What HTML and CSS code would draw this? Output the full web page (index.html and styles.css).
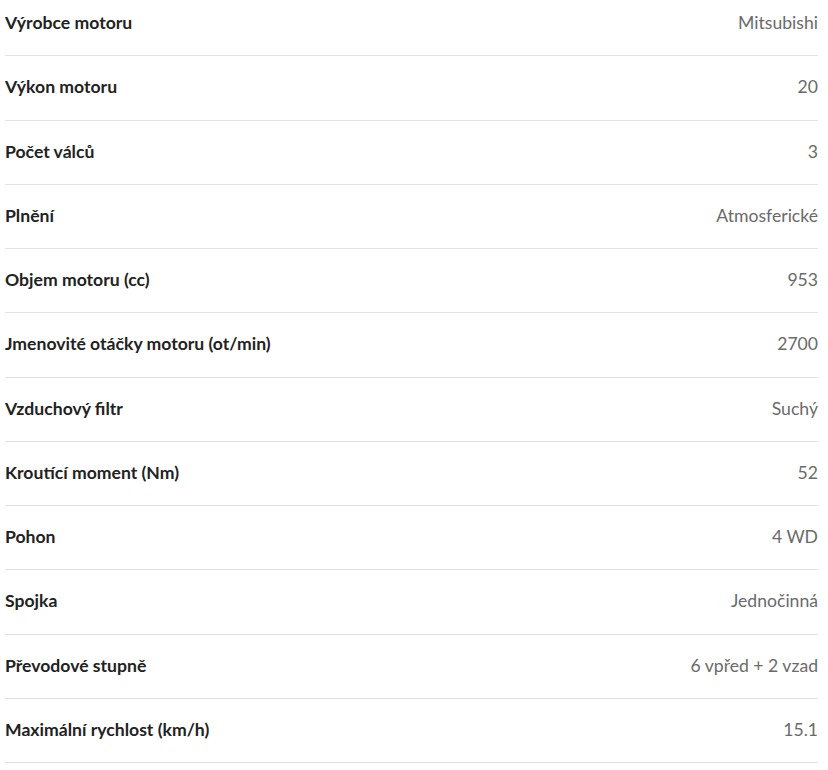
FILE: index.html
```html
<!DOCTYPE html>
<html lang="cs">
<head>
<meta charset="utf-8">
<link rel="stylesheet" href="styles.css">
</head>
<body>
<div class="specs">
  <div class="row"><span class="label">Výrobce motoru</span><span class="value">Mitsubishi</span></div>
  <div class="row"><span class="label">Výkon motoru</span><span class="value">20</span></div>
  <div class="row"><span class="label">Počet válců</span><span class="value">3</span></div>
  <div class="row"><span class="label">Plnění</span><span class="value">Atmosferické</span></div>
  <div class="row"><span class="label">Objem motoru (cc)</span><span class="value">953</span></div>
  <div class="row"><span class="label">Jmenovité otáčky motoru (ot/min)</span><span class="value">2700</span></div>
  <div class="row"><span class="label">Vzduchový filtr</span><span class="value">Suchý</span></div>
  <div class="row"><span class="label">Kroutící moment (Nm)</span><span class="value">52</span></div>
  <div class="row"><span class="label">Pohon</span><span class="value">4 WD</span></div>
  <div class="row"><span class="label">Spojka</span><span class="value">Jednočinná</span></div>
  <div class="row"><span class="label">Převodové stupně</span><span class="value">6 vpřed + 2 vzad</span></div>
  <div class="row"><span class="label">Maximální rychlost (km/h)</span><span class="value">15.1</span></div>
</div>
</body>
</html>
```
FILE: styles.css
```css
html, body {
  margin: 0;
  padding: 0;
  background: #fff;
}
body {
  font-family: Lato, "Open Sans", sans-serif;
  font-size: 17.6px;
}
.specs {
  margin: -8px 10px 0 5px;
}
.row {
  display: flex;
  justify-content: space-between;
  align-items: center;
  padding: 18px 0 20px;
  line-height: 25.27px;
  border-bottom: 1px solid #e2e2e2;
}
.label {
  font-weight: 700;
  color: #222;
}
.value {
  color: #6a6a6a;
}
```
